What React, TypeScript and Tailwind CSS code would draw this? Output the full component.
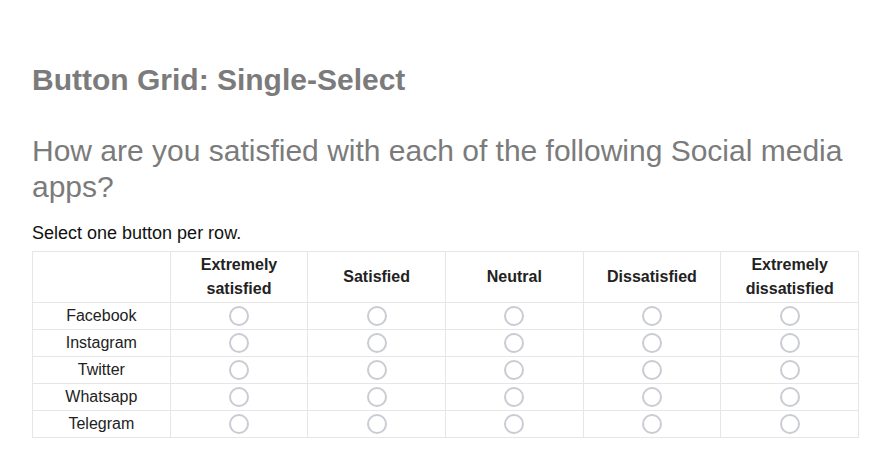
const columns = [
  ['Extremely', 'satisfied'],
  ['Satisfied'],
  ['Neutral'],
  ['Dissatisfied'],
  ['Extremely', 'dissatisfied'],
];

const apps = ['Facebook', 'Instagram', 'Twitter', 'Whatsapp', 'Telegram'];

function Radio() {
  return (
    <span className="inline-block w-[20px] h-[20px] rounded-full border-2 border-[#c9ccd3] bg-white align-middle" />
  );
}

export default function App() {
  return (
    <div className="min-h-screen bg-white font-['Liberation_Sans',Arial,sans-serif] pl-[32px] pr-[30px] pt-[62px]">
      <h1 className="text-[30px] leading-[36px] font-bold text-[#7b7b7b]">Button Grid: Single-Select</h1>

      <h2 className="mt-[35px] text-[30px] leading-[36px] text-[#7b7b7b]">
        How are you satisfied with each of the following Social media apps?
      </h2>

      <p className="mt-[15px] text-[18px] leading-[27px] text-[#111]">Select one button per row.</p>

      <table className="mt-[4px] w-[827px] table-fixed border-collapse">
        <thead>
          <tr className="h-[51px]">
            <th className="border border-[#e6e6e6]" />
            {columns.map((c) => (
              <th
                key={c.join(' ')}
                className="border border-[#e6e6e6] text-[16px] leading-[24px] font-bold text-[#222] text-center align-middle"
              >
                {c.map((line) => (
                  <div key={line}>{line}</div>
                ))}
              </th>
            ))}
          </tr>
        </thead>
        <tbody>
          {apps.map((app) => (
            <tr key={app} className="h-[27px]">
              <td className="border border-[#e6e6e6] text-[16px] leading-[20px] text-[#222] text-center align-middle">
                {app}
              </td>
              {columns.map((c) => (
                <td key={c.join(' ')} className="border border-[#e6e6e6] text-center align-middle leading-none p-0">
                  <Radio />
                </td>
              ))}
            </tr>
          ))}
        </tbody>
      </table>
    </div>
  );
}
